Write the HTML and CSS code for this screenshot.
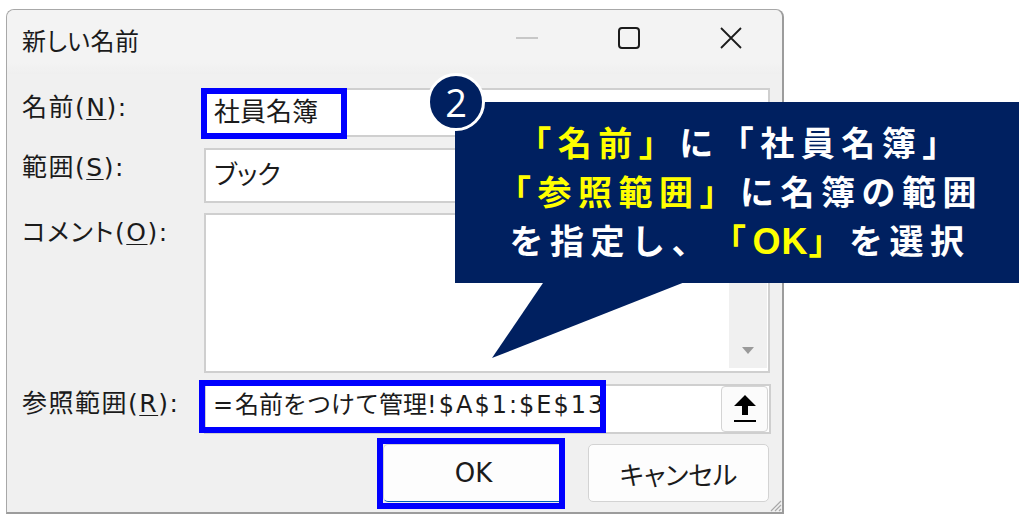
FILE: index.html
```html
<!DOCTYPE html>
<html lang="ja">
<head>
<meta charset="utf-8">
<title>新しい名前</title>
<link rel="stylesheet" href="styles.css">
</head>
<body>
<div class="page">
  <div class="dialog">
    <div class="titlebar">
      <div class="title">新しい名前</div>
      <div class="controls">
        <div class="ctl"><svg width="24" height="24" viewBox="0 0 24 24"><line x1="1" y1="12" x2="23" y2="12" stroke="#b8b8b8" stroke-width="1.5"/></svg></div>
        <div class="ctl"><svg width="24" height="24" viewBox="0 0 24 24"><rect x="2" y="2" width="20" height="20" rx="3" fill="none" stroke="#1b1b1b" stroke-width="2"/></svg></div>
        <div class="ctl"><svg width="24" height="24" viewBox="0 0 24 24"><path d="M2 2L22 22M22 2L2 22" stroke="#1b1b1b" stroke-width="1.8" fill="none"/></svg></div>
      </div>
    </div>
    <div class="form">
      <div class="row">
        <div class="lbl">名前(<u>N</u>):</div>
        <div class="field f-name"><span class="val val-lg">社員名簿</span><span class="hl hl-name"></span></div>
      </div>
      <div class="row r-scope">
        <div class="lbl">範囲(<u>S</u>):</div>
        <div class="field f-scope"><span class="val val-lg">ブック</span></div>
      </div>
      <div class="row r-comment">
        <div class="lbl">コメント(<u>O</u>):</div>
        <div class="field f-comment">
          <div class="c-area"></div>
          <div class="scroll"><span class="tri"></span></div>
        </div>
      </div>
      <div class="row r-ref">
        <div class="lbl">参照範囲(<u>R</u>):</div>
        <div class="field f-ref">
          <span class="val val-ref"><span class="lat">=</span>名前をつけて管理<span class="lat">!$A$1:$E$13</span></span>
          <div class="upbtn"><svg width="24" height="28" viewBox="0 0 24 28"><path d="M12 0L1 11H9V20H15V11H23Z" fill="#000"/><rect x="1" y="25" width="22" height="2" fill="#000"/></svg></div>
          <span class="hl hl-ref"></span>
        </div>
      </div>
    </div>
    <div class="buttons">
      <div class="btn btn-ok">OK<span class="hl hl-ok"></span></div>
      <div class="btn">キャンセル</div>
    </div>
    <svg class="grip" width="14" height="14" viewBox="0 0 14 14"><path d="M13 3L3 13M13 7L7 13M13 11L11 13" stroke="#a8a8a8" stroke-width="1.2"/></svg>
  </div>

  <svg class="pointer" width="205" height="82" viewBox="0 0 205 82"><polygon points="55,0 200,0 2,78" fill="#002060"/></svg>
  <div class="callout">
    <div class="cl"><span class="y">「名前」</span>に「社員名簿」</div>
    <div class="cl"><span class="y">「参照範囲」</span>に名簿の範囲</div>
    <div class="cl">を指定し、<span class="y">「<span class="ok">OK</span>」</span>を選択</div>
  </div>
  <div class="badge">2</div>
</div>
</body>
</html>
```

FILE: styles.css
```css
html, body {
  margin: 0;
  background: #ffffff;
}
body {
  font-family: "DejaVu Sans", "Noto Sans CJK JP", sans-serif;
  font-feature-settings: "palt" 1;
  text-spacing-trim: space-all;
  color: #1b1b1b;
}
.page {
  position: relative;
  width: 1024px;
  height: 522px;
  box-sizing: border-box;
  padding: 9px 0 0 6px;
  overflow: hidden;
}
.dialog {
  position: relative;
  width: 778px;
  height: 505px;
  box-sizing: border-box;
  border: 1px solid #a8a8a8;
  border-right: 2px solid #9c9c9c;
  border-bottom: 2px solid #9c9c9c;
  border-radius: 8px 8px 0 0;
  background: #f0f0f0;
}
.titlebar {
  display: flex;
  height: 64px;
  background: linear-gradient(#f3f3f3, #f3f3f3 82%, #efefef);
  border-radius: 8px 8px 0 0;
}
.title {
  flex: 1;
  padding: 18px 0 0 15px;
  font-size: 24px;
  line-height: 28px;
  letter-spacing: 0.5px;
}
.controls {
  display: flex;
}
.ctl {
  width: 102px;
  height: 56px;
  display: flex;
  align-items: center;
  justify-content: center;
}
.form {
  padding: 14px 0 0 15px;
}
.row {
  display: grid;
  grid-template-columns: 182px 566px;
}
.r-scope { margin-top: 11px; }
.r-comment { margin-top: 10px; }
.r-ref { margin-top: 11px; }
.lbl {
  font-size: 25px;
  line-height: 28px;
  padding-top: 6px;
  letter-spacing: 1.5px;
  white-space: nowrap;
}
.lbl u {
  text-underline-offset: 3px;
  text-decoration-thickness: 1px;
}
.field {
  position: relative;
  box-sizing: border-box;
  background: #ffffff;
  border: 2px solid #cfcfcf;
}
.f-name { height: 49px; }
.f-scope { height: 55px; }
.f-comment {
  height: 160px;
  display: flex;
}
.f-ref {
  height: 50px;
  width: 567px;
  display: flex;
}
.val {
  display: block;
  padding-left: 8px;
  white-space: nowrap;
}
.val-lg {
  font-size: 26px;
}
.f-name .val-lg { line-height: 45px; }
.f-scope .val-lg { line-height: 51px; }
.val-ref {
  flex: 1;
  font-size: 24px;
  line-height: 38px;
  padding-left: 7px;
  font-feature-settings: normal;
}
.lat {
  letter-spacing: 2px;
}
.c-area { flex: 1; }
.scroll {
  width: 38px;
  margin: 2px 1px 3px 0;
  background: #f0f0f0;
  display: flex;
  align-items: flex-end;
  justify-content: center;
}
.tri {
  width: 0;
  height: 0;
  border-left: 6px solid transparent;
  border-right: 6px solid transparent;
  border-top: 7px solid #9a9a9a;
  margin-bottom: 14px;
}
.upbtn {
  width: 47px;
  margin-right: 1px;
  box-sizing: border-box;
  background: #fbfbfb;
  border: 1px solid #d4d4d4;
  border-radius: 4px;
  display: flex;
  align-items: center;
  justify-content: center;
}
.hl {
  position: absolute;
  box-sizing: border-box;
  border: 6px solid #0000ff;
}
.hl-name { left: -5px; top: -2px; width: 146px; height: 51px; }
.hl-ref { left: -7px; top: -6px; width: 407px; height: 53px; }
.hl-ok { left: -7px; top: -7px; width: 188px; height: 71px; }
.buttons {
  display: flex;
  justify-content: flex-end;
  gap: 24px;
  margin-top: 10px;
  padding-right: 13px;
}
.btn {
  position: relative;
  width: 181px;
  height: 58px;
  box-sizing: border-box;
  background: #fdfdfd;
  border: 1px solid #d3d3d3;
  border-radius: 5px;
  font-size: 26px;
  display: flex;
  align-items: center;
  justify-content: center;
}
.btn-ok {
  border-bottom: 1px solid #005fb8;
}
.grip {
  position: absolute;
  right: 0;
  bottom: 0;
}
.callout {
  position: absolute;
  left: 455px;
  top: 102px;
  width: 564px;
  height: 181px;
  box-sizing: border-box;
  padding: 18px 0 0 6px;
  background: #002060;
  color: #ffffff;
  font-family: "Liberation Sans", "Noto Sans CJK JP", sans-serif;
  font-feature-settings: normal;
  text-spacing-trim: space-all;
  font-weight: 700;
  font-size: 34px;
  line-height: 49px;
  letter-spacing: 6.5px;
  text-align: center;
}
.cl {
  white-space: nowrap;
  height: 49px;
}
.y {
  color: #ffff00;
}
.ok {
  font-size: 36px;
  line-height: 1;
  letter-spacing: 1px;
}
.pointer {
  position: absolute;
  left: 490px;
  top: 280px;
}
.badge {
  position: absolute;
  left: 427px;
  top: 73px;
  width: 58px;
  height: 58px;
  box-sizing: border-box;
  border: 3px solid #ffffff;
  border-radius: 50%;
  background: #002060;
  color: #ffffff;
  font-family: "Open Sans", sans-serif;
  font-size: 38px;
  line-height: 52px;
  text-align: center;
}
```
